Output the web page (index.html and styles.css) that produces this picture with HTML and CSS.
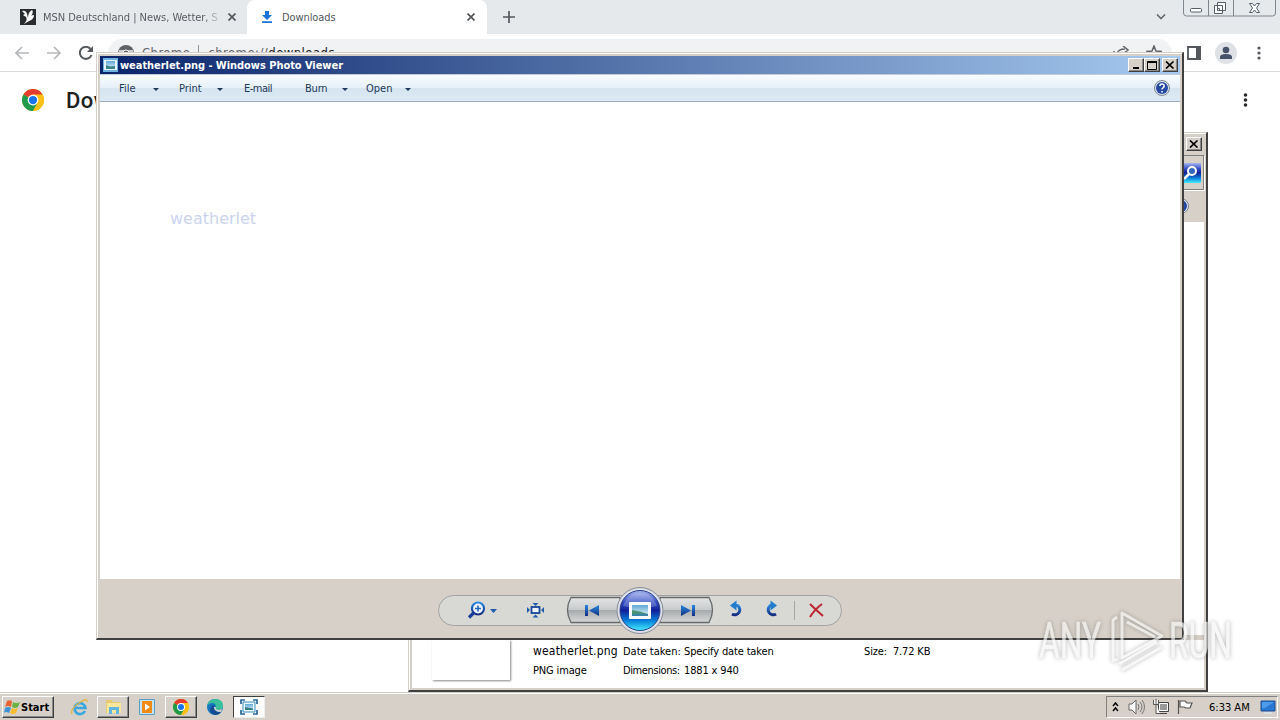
FILE: index.html
```html
<!DOCTYPE html>
<html lang="en">
<head>
    <meta charset="UTF-8">
    <meta name="viewport" content="width=device-width, initial-scale=1.0">
    <title>Desktop</title>
    <link rel="stylesheet" href="styles.css">
</head>
<body>
<!-- shared artwork -->
<svg class="defs" width="0" height="0">
    <defs>
        <linearGradient id="blue" x2="0" y2="1"><stop stop-color="#2787dd"/><stop offset="1" stop-color="#152e82"/></linearGradient>
        <linearGradient id="photo" x2="0" y2="1"><stop stop-color="#78bce8"/><stop offset=".5" stop-color="#d7edf0"/><stop offset=".55" stop-color="#508d76"/><stop offset="1" stop-color="#3987b2"/></linearGradient>
        <linearGradient id="sky" x2="0" y2="1"><stop stop-color="#5fa8d8"/><stop offset="1" stop-color="#e4f3f4"/></linearGradient>
        <linearGradient id="orb" x2="0" y2="1"><stop stop-color="#a9b8ef"/><stop offset=".3" stop-color="#304ac2"/><stop offset=".5" stop-color="#10209a"/><stop offset=".75" stop-color="#087fda"/><stop offset="1" stop-color="#45edff"/></linearGradient>
        <linearGradient id="nav" x2="0" y2="1"><stop stop-color="#e4e5e5"/><stop offset=".48" stop-color="#c8cbcc"/><stop offset=".52" stop-color="#a8abad"/><stop offset="1" stop-color="#d7d9d8"/></linearGradient>
    </defs>
    <symbol id="chrome" viewBox="0 0 24 24">
        <circle cx="12" cy="12" r="12" fill="#fbc116"/>
        <path d="M12 12L1.6 6A12 12 0 0 1 22.4 6Z" fill="#e33b2e"/>
        <path d="M1.6 6A12 12 0 0 0 12 24L17.2 15L12 12Z" fill="#229a4b"/>
        <path d="M12 6H22.4A12 12 0 0 1 12 24L17.2 15Z" fill="#fbc116"/>
        <circle cx="12" cy="12" r="5.9" fill="#fff"/><circle cx="12" cy="12" r="4.5" fill="#1a73e8"/>
    </symbol>
    <symbol id="help" viewBox="0 0 16 16">
        <circle cx="8" cy="8" r="7.5" fill="#dce5ef" stroke="#7d8794"/><circle cx="8" cy="8" r="6" fill="#2448a4"/>
        <path d="M5.8 6Q6 4 8 4T10.2 6Q10.2 7 9 7.8T8 9.5" fill="none" stroke="#fff" stroke-width="1.5"/><path d="M7.2 11h1.6v1.5H7.2z" fill="#fff"/>
    </symbol>
    <symbol id="close" viewBox="0 0 10 8"><path d="M1 .5l7.500 7M8.500 .5L1 7.500" stroke="#000" stroke-width="1.700"/></symbol>
</svg>

<div class="desktop">
    <main class="browser">
        <div class="tabs">
            <div class="tab">
                <svg width="16" height="16" viewBox="0 0 16 16"><path d="M0 0h16v16H0z" fill="#292b2e"/><path d="M2 2q4-1 5 3l1 4Q8 3 12 1q2 2-1 6 3-2 3 0-1 4-5 5l-5 3q4-4 2-7L3 6l2-1z" fill="#fff"/></svg>
                <span class="tab-title msn">MSN Deutschland | News, Wetter, S</span>
                <svg class="tab-x" width="8" height="8" viewBox="0 0 8 8"><path d="M.5.5l7 7m0-7l-7 7" stroke="#54585c" stroke-width="1.7"/></svg>
            </div>
            <div class="tab active">
                <svg width="12" height="12" viewBox="0 0 12 12"><path d="M4 0h4v4h3L6 9 1 4h3zM1 10.3h10V12H1z" fill="#1a73d8"/></svg>
                <span class="tab-title">Downloads</span>
                <svg class="tab-x" width="8" height="8" viewBox="0 0 8 8"><path d="M.5.5l7 7m0-7l-7 7" stroke="#54585c" stroke-width="1.7"/></svg>
            </div>
            <svg class="plus" width="12" height="12" viewBox="0 0 12 12"><path d="M6 0v12M0 6h12" stroke="#54585c" stroke-width="1.7"/></svg>
            <svg class="chevron" width="10" height="6" viewBox="0 0 10 6"><path d="M1 .5l4 4 4-4" fill="none" stroke="#666a6e" stroke-width="1.6"/></svg>
            <svg class="chrome-controls" width="96" height="17" viewBox="0 0 96 17">
                <path d="M.5 0v13q0 3 3 3h86q3 0 3-3V0M25.5 0v16M50.5 0v16" fill="none" stroke="#80868d"/>
                <rect x="7.5" y="8.500" width="11" height="3.500" rx="1" fill="#fff" stroke="#555f6a"/>
                <path d="M34.500 2.500h8v8h-8zM31.500 5.500h8v8h-8zM34.500 8.500h2v2h-2z" fill="#fff" stroke="#555f6a"/>
                <path d="M66.500 3.500h3L71.500 6l2-2.500h3L73.500 8l3 4.500h-3l-2-2.500-2 2.500h-3l3-4.500z" fill="#fff" stroke="#555f6a"/>
            </svg>
        </div>
        <div class="toolbar">
            <svg class="arrow" width="14" height="14" viewBox="0 0 14 14"><path d="M14 7H1.500M7 1L1 7l6 6" fill="none" stroke="#b6b8ba" stroke-width="1.7"/></svg>
            <svg class="arrow" width="14" height="14" viewBox="0 0 14 14"><path d="M0 7h12.500M7 1l6 6-6 6" fill="none" stroke="#b6b8ba" stroke-width="1.7"/></svg>
            <svg class="reload" width="14" height="14" viewBox="0 0 14 14"><path d="M11.500 3A6 6 0 1 0 12.500 9" fill="none" stroke="#54585c" stroke-width="2"/><path d="M14 0v6H8z" fill="#54585c"/></svg>
            <div class="address">
                <svg width="16" height="16" viewBox="0 0 16 16"><circle cx="8" cy="8" r="8" fill="#5f6368"/><path d="M1 6h14M8 5l-6 5" stroke="#f1f3f4" stroke-width="1.5"/><circle cx="8" cy="8" r="3" fill="#5f6368" stroke="#f1f3f4"/></svg>
                <span class="chrome-word">Chrome</span><i></i><span class="url">chrome://<b>downloads</b></span>
                <svg class="share" width="17" height="14" viewBox="0 0 17 14"><path d="M1 5v8h12v-3M4 8q1-5 8-5M10 0l5 4-5 4" fill="none" stroke="#5f6368" stroke-width="1.500"/></svg>
                <svg class="star" width="16" height="16" viewBox="0 0 16 16"><path d="M8 1l2 5 5 .5-4 3.500 1.500 5L8 12l-4.500 3L5 10 1 6.500 6 6z" fill="none" stroke="#5f6368" stroke-width="1.500"/></svg>
            </div>
            <svg class="panel" width="14" height="14" viewBox="0 0 14 14"><path d="M1 1h12v12H1z" fill="#fff" stroke="#54585c" stroke-width="1.800"/><path d="M9 0h5v14H9z" fill="#54585c"/></svg>
            <svg class="avatar" width="22" height="22" viewBox="0 0 22 22"><circle cx="11" cy="11" r="11" fill="#dee1e6"/><circle cx="11" cy="8" r="3.300" fill="#46536b"/><path d="M5 17v-2q0-3 6-3t6 3v2z" fill="#46536b"/></svg>
            <svg class="dots" width="4" height="14" viewBox="0 0 4 14"><g fill="#54585c"><circle cx="2" cy="2" r="1.600"/><circle cx="2" cy="7" r="1.600"/><circle cx="2" cy="12" r="1.600"/></g></svg>
        </div>
        <div class="downloads">
            <svg width="22" height="22"><use href="#chrome"/></svg>
            <h1>Downloads</h1>
            <svg class="page-dots" width="5" height="14" viewBox="0 0 5 14"><g fill="#292b2e"><circle cx="2.500" cy="2" r="1.800"/><circle cx="2.500" cy="7" r="1.800"/><circle cx="2.500" cy="12" r="1.800"/></g></svg>
        </div>
    </main>

    <section class="window explorer">
        <div class="explorer-top">
            <span class="win-btn"><svg width="10" height="8"><use href="#close"/></svg></span>
            <div class="search-row">
                <svg width="20" height="20" viewBox="0 0 20 20"><path d="M0 0h20v20H0z" fill="url(#orb)"/><circle cx="11" cy="8" r="4" fill="#3267bd" stroke="#fff" stroke-width="2"/><path d="M8 11l-5 5" stroke="#fff" stroke-width="2.500"/></svg>
            </div>
            <svg class="explorer-help" width="16" height="16"><use href="#help"/></svg>
        </div>
        <div class="files"></div>
        <div class="details">
            <div class="thumb"></div>
            <div class="col name"><span class="filename">weatherlet.png</span><span class="png">PNG image</span></div>
            <div class="col labels"><span class="dt">Date taken:</span><span class="dim">Dimensions:</span></div>
            <div class="col values"><span class="specify">Specify date taken</span><span class="px">1881 x 940</span></div>
            <div class="col"><span class="size">Size:&nbsp; 7.72 KB</span></div>
        </div>
    </section>

    <section class="window viewer">
        <header class="titlebar">
            <svg width="15" height="14" viewBox="0 0 15 14"><path d="M0 0h15v14H0z" fill="#6eb0de"/><path d="M1 2h13v10H1z" fill="#e4f4fb"/><path d="M3 3h9v8H3z" fill="url(#sky)"/><path d="M3 7l4 1.500 5-.5v3H3z" fill="#3c8289"/></svg>
            <span class="caption">weatherlet.png - Windows Photo Viewer</span>
            <span class="win-btn"><svg width="10" height="8"><path d="M2 6h6v2H2z"/></svg></span>
            <span class="win-btn"><svg width="10" height="9"><path d="M.5 1h9v7.500h-9z" fill="none" stroke="#000"/><path d="M0 0h10v2H0z"/></svg></span>
            <span class="win-btn last"><svg width="10" height="8"><use href="#close"/></svg></span>
        </header>
        <nav class="menu">
            <span class="item file">File</span><i></i>
            <span class="item print">Print</span><i></i>
            <span class="item email">E-mail</span>
            <span class="item burn">Burn</span><i></i>
            <span class="item open">Open</span><i></i>
            <svg class="help" width="16" height="16"><use href="#help"/></svg>
        </nav>
        <div class="canvas"><span>weatherlet</span></div>
        <footer class="controls">
            <svg width="404" height="48" viewBox="438 587 404 48">
                <rect x="438.500" y="595.500" width="403" height="30" rx="15" fill="#d8d8d4" stroke="#a1a3a3"/>
                <circle cx="478" cy="608.500" r="6" fill="#eef6fc" stroke="url(#blue)" stroke-width="2.200"/><path d="M474 612.500l-5 5" stroke="#1b3f98" stroke-width="3.200"/><path d="M475 608.500h6M478 605.500v6" stroke="#2464bc" stroke-width="1.600"/>
                <path d="M490 609h7l-3.500 4z" fill="#1f5baa"/>
                <rect x="531.500" y="607" width="8" height="6" fill="#eef4fa" stroke="#174795" stroke-width="1.800"/>
                <path d="M532.500 603h6l-3 3zM532.500 617.500h6l-3-3zM527 607v6l3-3zM544 607v6l-3-3z" fill="#205da9"/>
                <path d="M571 597.500h49v25h-49q-7-12.500 0-25zM660 597.500h49q7 12.500 0 25h-49z" fill="url(#nav)" stroke="#656a6d" stroke-width="1.300"/>
                <path d="M585 605h3v11h-3zM599 605v11l-10-5.500zM681 605l10 5.500-10 5.500zM692 605h3v11h-3z" fill="url(#blue)"/>
                <circle cx="640" cy="610.500" r="23" fill="#dce1e9" stroke="#868b96"/><circle cx="640" cy="610.500" r="20" fill="url(#orb)" stroke="#293d87"/>
                <path d="M623 606Q628 593 640 593t17 13q-17 4-34 0" fill="#fff" opacity=".22"/>
                <rect x="629" y="602" width="22" height="17" rx="1" fill="#f6f8fa"/><rect x="632" y="605" width="16" height="11" fill="url(#sky)"/><path d="M632 610q7 1 16 4v2h-16z" fill="#4a936f"/><path d="M632 614q8-1 16 0v2h-16z" fill="#3b85a7"/>
                <path d="M735 605.500h2.500a5 5 0 1 1-5.500 8.500" fill="none" stroke="url(#blue)" stroke-width="3"/><path d="M730 605.500l6.500-5v10z" fill="#237dcc"/>
                <path d="M773 605.500h-2.500a5 5 0 1 0 5.500 8.500" fill="none" stroke="url(#blue)" stroke-width="3"/><path d="M777 605.500l-6.500-5v10z" fill="#237dcc"/>
                <path d="M794.500 601v19" stroke="#a6a7a7"/><path d="M810 604q6 6 13 12M822 604q-7 5-12 13" stroke="#bd2732" stroke-width="2" fill="none"/>
            </svg>
        </footer>
    </section>

    <svg class="watermark" width="204" height="72" viewBox="1035 605 204 72">
        <text x="1039" y="658" textLength="62" lengthAdjust="spacingAndGlyphs">ANY</text>
        <text x="1169" y="658" textLength="63" lengthAdjust="spacingAndGlyphs">RUN</text>
        <path d="M1117 617l-4 3v41l4-2M1122 613l40 23-40 22zM1127 622l28 15M1119 664l38-22M1122 670l40-23" />
    </svg>

    <div class="taskbar">
        <div class="start">
            <svg width="16" height="16" viewBox="0 0 16 16"><path d="M3 2q3-1.500 5 0L7 8Q4 6 1 8z" fill="#e76333"/><path d="M9 3q3 2 7 0l-2 5q-3 2-6 0z" fill="#6cb344"/><path d="M1 9q3-2 6 0l-2 5q-3-2-5 0z" fill="#3e91d4"/><path d="M8 9q3 2 6 0l-2 5q-3 2-6 0z" fill="#f7be2e"/></svg>
            <span>Start</span>
        </div>
        <div class="task ie"><svg width="17" height="17" viewBox="0 0 17 17"><path d="M14 12A5.500 5.500 0 1 1 14.500 9H4" fill="none" stroke="#39a7df" stroke-width="2.600"/><path d="M1 15Q-1 10 8 4t8-1" fill="none" stroke="#e4b645" stroke-width="1.300"/></svg></div>
        <div class="task raised"><svg width="17" height="16" viewBox="0 0 17 16"><path d="M1 1h6l1 2h7v11H1z" fill="#e8ca70"/><path d="M2 4h14v10H2z" fill="#f7e69b"/><path d="M4 8h10v7h-3v-4H7v4H4z" fill="#62b5dc"/></svg></div>
        <div class="task"><svg width="16" height="16" viewBox="0 0 16 16"><path d="M.5.5h15v15H.5z" fill="#c4e3f4" stroke="#5a9ec8"/><path d="M3 2h10v12H3z" fill="#f28a16"/><path d="M6 4.500v7L11 8z" fill="#fff"/></svg></div>
        <div class="task raised"><svg width="16" height="16"><use href="#chrome"/></svg></div>
        <div class="task"><svg width="16" height="16" viewBox="0 0 16 16"><circle cx="8" cy="8" r="8" fill="#1676bd"/><path d="M0 7Q2 0 8 0q8 0 8 7 0 4-5 4-3 0-2-3 0-4-4-4-3 0-5 3" fill="#39bf9c"/><path d="M7 7q-2 6 7 6-2 3-6 3-7-2-4-8 1-2 4-2z" fill="#164b91"/><path d="M9 8q-1 3 3 3l3-1-1 3Q7 13 7 8z" fill="#d6d2ca"/></svg></div>
        <div class="task pressed"><svg width="18" height="16" viewBox="0 0 18 16"><path d="M3 3h12v10H3z" fill="#eef8fd" stroke="#398bc3"/><path d="M5 5h8v6H5z" fill="url(#sky)"/><path d="M5 8l8 1.500V11H5z" fill="#367c86"/><path d="M1 5V1h4M13 1h4v4M17 11v4h-4M5 15H1v-4" fill="none" stroke="#28659a" stroke-width="1.700"/></svg></div>
        <div class="tray">
            <svg class="up" width="7" height="10" viewBox="0 0 7 10"><path d="M1 4l2.500-3L6 4M1 9l2.500-3L6 9" fill="none" stroke="#000" stroke-width="1.500"/></svg>
            <svg class="sound" width="17" height="16" viewBox="0 0 17 16"><path d="M1 5h3l4-4v14l-4-4H1z" fill="#fff" stroke="#666"/><path d="M10 5q2 3 0 6M12 3q4 5 0 10M14 1q5 7 0 14" fill="none" stroke="#777"/></svg>
            <svg class="network" width="17" height="16" viewBox="0 0 17 16"><path d="M5.500 3.500h10v9h-10zM7 14.500h7" fill="#999" stroke="#444"/><path d="M6.500 4.500h8v7h-8z" fill="none" stroke="#fff"/><path d="M.5 1v4.500h5V1M3 0v5.500M3 5v9.500h4" fill="#fff" stroke="#555"/></svg>
            <svg class="flag" width="17" height="16" viewBox="0 0 17 16"><path d="M1.500 15V1M3 2h5l2 2h5l-2 5H9L7 8H3z" fill="#fff" stroke="#555" stroke-width="1.200"/></svg>
            <span class="clock">6:33 AM</span>
            <svg width="16" height="14" viewBox="0 0 16 14"><path d="M1 1h14v10H1z" fill="#2977d3" stroke="#1c4f93"/><path d="M2 2h12L5 8H2z" fill="#4d9cea"/><path d="M4 13h8" stroke="#d8e7ef" stroke-width="1.500"/></svg>
        </div>
    </div>
</div>
</body>
</html>
```
FILE: styles.css
```css
:root {
    --face: #d6d0c8;
    --edge: #404040;
    --ui-font: "DejaVu Sans Condensed", "DejaVu Sans", sans-serif;
}

* {
    box-sizing: border-box;
}

body {
    margin: 0;
    overflow: hidden;
    font-family: var(--ui-font);
    font-size: 11px;
    color: #000;
}

svg {
    display: block;
    flex: none;
}

.defs {
    position: absolute;
}

.desktop {
    position: relative;
    width: 1280px;
    height: 720px;
    overflow: hidden;
    background: #fff;
}

.tabs {
    height: 34px;
    display: flex;
    align-items: center;
    background: #e6e9ec;
}

.tab {
    width: 247px;
    height: 34px;
    display: flex;
    align-items: center;
    padding-left: 20px;
    color: #53575b;
}

.tab.active {
    width: 240px;
    padding-left: 14px;
    background: #fff;
    border-radius: 8px 8px 0 0;
}

.tab-title {
    flex: 1;
    margin-left: 9px;
    white-space: nowrap;
}

.active .tab-title {
    letter-spacing: -0.1px;
}

.msn {
    margin-left: 7px;
    letter-spacing: -0.03px;
    background: linear-gradient(90deg, #53575b 162px, #e6e9ec 178px);
    -webkit-background-clip: text;
    color: transparent;
}

.tab-x {
    margin-right: 11px;
}

.active .tab-x {
    margin-right: 12px;
}

.plus {
    margin-left: 16px;
}

.chevron {
    margin-left: auto;
}

.chrome-controls {
    align-self: flex-start;
    margin-left: 17px;
    margin-right: 1px;
}

.toolbar {
    height: 38px;
    display: flex;
    align-items: center;
    padding-left: 15px;
    border-bottom: 1px solid #d9dbdd;
}

.arrow {
    margin-right: 18px;
}

.reload {
    margin-right: 15px;
}

.address {
    width: 1064px;
    height: 28px;
    display: flex;
    align-items: center;
    padding-left: 10px;
    border-radius: 14px;
    background: #f1f2f4;
    font-size: 13px;
    color: #5f6368;
}

.chrome-word {
    margin-left: 8px;
    letter-spacing: 0.4px;
}

.address i {
    width: 1px;
    height: 15px;
    background: #92969a;
    margin: 0 9px 0 8px;
}

.url {
    letter-spacing: 0.45px;
}

.url b {
    font-weight: normal;
    color: #202124;
}

.share {
    margin-left: auto;
    margin-right: 16px;
}

.star {
    margin-right: 10px;
}

.panel {
    margin-left: 15px;
}

.avatar {
    margin-left: 14px;
}

.dots {
    margin-left: 20px;
}

.downloads {
    height: 56px;
    display: flex;
    align-items: center;
    padding-left: 22px;
}

.downloads h1 {
    margin: 0 0 0 22px;
    font: 500 22px Roboto, sans-serif;
    letter-spacing: 0.5px;
    color: #202124;
}

.page-dots {
    margin-left: auto;
    margin-right: 32px;
}

.window {
    position: absolute;
    background: var(--face);
    border: 1px solid var(--face);
    border-right: 2px solid var(--edge);
    border-bottom: 2px solid var(--edge);
    box-shadow: inset 1px 1px #fff;
}

.explorer {
    left: 408px;
    top: 132px;
    width: 800px;
    height: 560px;
    padding: 3px 2px 2px 3px;
    display: flex;
    flex-direction: column;
}

.explorer-top {
    height: 86px;
    display: flex;
    flex-direction: column;
    align-items: flex-end;
}

.explorer-top .win-btn {
    margin: 1px 2px 0 0;
}

.search-row {
    width: 100%;
    height: 35px;
    margin-top: 4px;
    display: flex;
    align-items: center;
    justify-content: flex-end;
    padding-right: 2px;
    border: 1px solid #808080;
    box-shadow: 1px 1px #fff;
}

.explorer-help {
    margin: 8px 15px 0 0;
}

.files {
    flex: 1;
    background: #fff;
}

.details {
    height: 53px;
    display: flex;
    align-items: flex-end;
    padding: 0 0 8px 20px;
    background: #fff;
    border-top: 5px solid var(--face);
}

.thumb {
    width: 78px;
    height: 40px;
    background: #fff;
    box-shadow: 1px 1px 2px #888;
}

.col {
    height: 35px;
    display: flex;
    flex-direction: column;
    gap: 6px;
    white-space: nowrap;
    line-height: 13px;
}

.name {
    width: 90px;
    margin-left: 23px;
}

.labels {
    width: 61px;
}

.values {
    width: 180px;
}

.filename {
    font-size: 12px;
    letter-spacing: 0.2px;
}

.png,
.specify,
.px,
.size {
    letter-spacing: -0.15px;
}

.dim {
    letter-spacing: -0.4px;
}

.viewer {
    left: 96px;
    top: 52px;
    width: 1088px;
    height: 588px;
    padding: 3px 2px 2px 3px;
}

.titlebar {
    height: 18px;
    display: flex;
    align-items: center;
    padding: 0 2px 0 3px;
    color: #fff;
    font-weight: bold;
    background: linear-gradient(90deg, #0a246a, #a6caf0);
}

.caption {
    flex: 1;
    margin-left: 2px;
    white-space: nowrap;
    letter-spacing: -0.05px;
}

.win-btn {
    width: 16px;
    height: 14px;
    display: flex;
    align-items: center;
    justify-content: center;
    background: var(--face);
    border: 1px solid #fff;
    border-right-color: #404040;
    border-bottom-color: #404040;
    box-shadow: inset -1px -1px #888;
}

.win-btn.last {
    margin-left: 2px;
}

.menu {
    height: 28px;
    display: flex;
    align-items: center;
    padding: 2px 0 0 19px;
    color: #1e395b;
    background: linear-gradient(#f9fcfe, #e6f0f8 48%, #d6e5f0 52%, #dce9f4);
    border-top: 1px solid #c1cbd7;
    border-bottom: 1px solid #a0aebb;
}

.item {
    line-height: 12px;
}

.menu i {
    border: 3px solid transparent;
    border-top-color: #1e395b;
    border-bottom: 0;
}

.file {
    width: 34px;
}

.print {
    width: 38px;
    margin-left: 20px;
}

.email {
    width: 61px;
    margin-left: 21px;
    letter-spacing: -0.5px;
}

.burn {
    width: 37px;
    letter-spacing: -0.2px;
}

.open {
    width: 39px;
    margin-left: 18px;
}

.help {
    margin: -3px 10px 0 auto;
}

.canvas {
    height: 477px;
    padding: 107px 0 0 70px;
    background: #fff;
    color: #ccd4f0;
    font: 16px/20px "DejaVu Sans", sans-serif;
}

.controls {
    height: 56px;
    display: flex;
    align-items: center;
    justify-content: center;
    padding-top: 7px;
}

.watermark {
    position: absolute;
    left: 1035px;
    top: 605px;
    filter: drop-shadow(0 0 2px rgba(80, 80, 80, 0.6));
    opacity: 0.7;
}

.watermark text {
    font: 400 50px Roboto, sans-serif;
    fill: #f4f4f4;
    stroke: #f4f4f4;
    stroke-width: 0.7;
}

.watermark path {
    fill: none;
    stroke: #f4f4f4;
    stroke-width: 3;
    stroke-linejoin: round;
}

.taskbar {
    position: absolute;
    left: 0;
    top: 692px;
    width: 1280px;
    height: 28px;
    display: flex;
    align-items: flex-start;
    padding: 3px 2px 0;
    background: var(--face);
    border-top: 1px solid var(--face);
    box-shadow: inset 0 1px #fff;
}

.start,
.raised {
    border: 1px solid #fff;
    border-right-color: #404040;
    border-bottom-color: #404040;
    box-shadow: inset -1px -1px #888;
}

.start {
    width: 52px;
    height: 22px;
    display: flex;
    align-items: center;
    gap: 1px;
    padding-left: 1px;
    font-weight: bold;
}

.task {
    width: 32px;
    height: 22px;
    margin-right: 2px;
    display: flex;
    align-items: center;
    justify-content: center;
}

.ie {
    margin-left: 9px;
}

.pressed {
    background: #fff;
    border: 1px solid #404040;
    border-right-color: #eee;
    border-bottom-color: #eee;
}

.tray {
    width: 172px;
    height: 22px;
    display: flex;
    align-items: center;
    margin-left: auto;
    padding-left: 5px;
    border: 1px solid #808080;
    border-right-color: #fff;
    border-bottom-color: #fff;
}

.sound {
    margin-left: 9px;
}

.network {
    margin-left: 8px;
}

.flag {
    margin-left: 7px;
}

.clock {
    width: 51px;
    margin-left: 15px;
    white-space: nowrap;
}
```
